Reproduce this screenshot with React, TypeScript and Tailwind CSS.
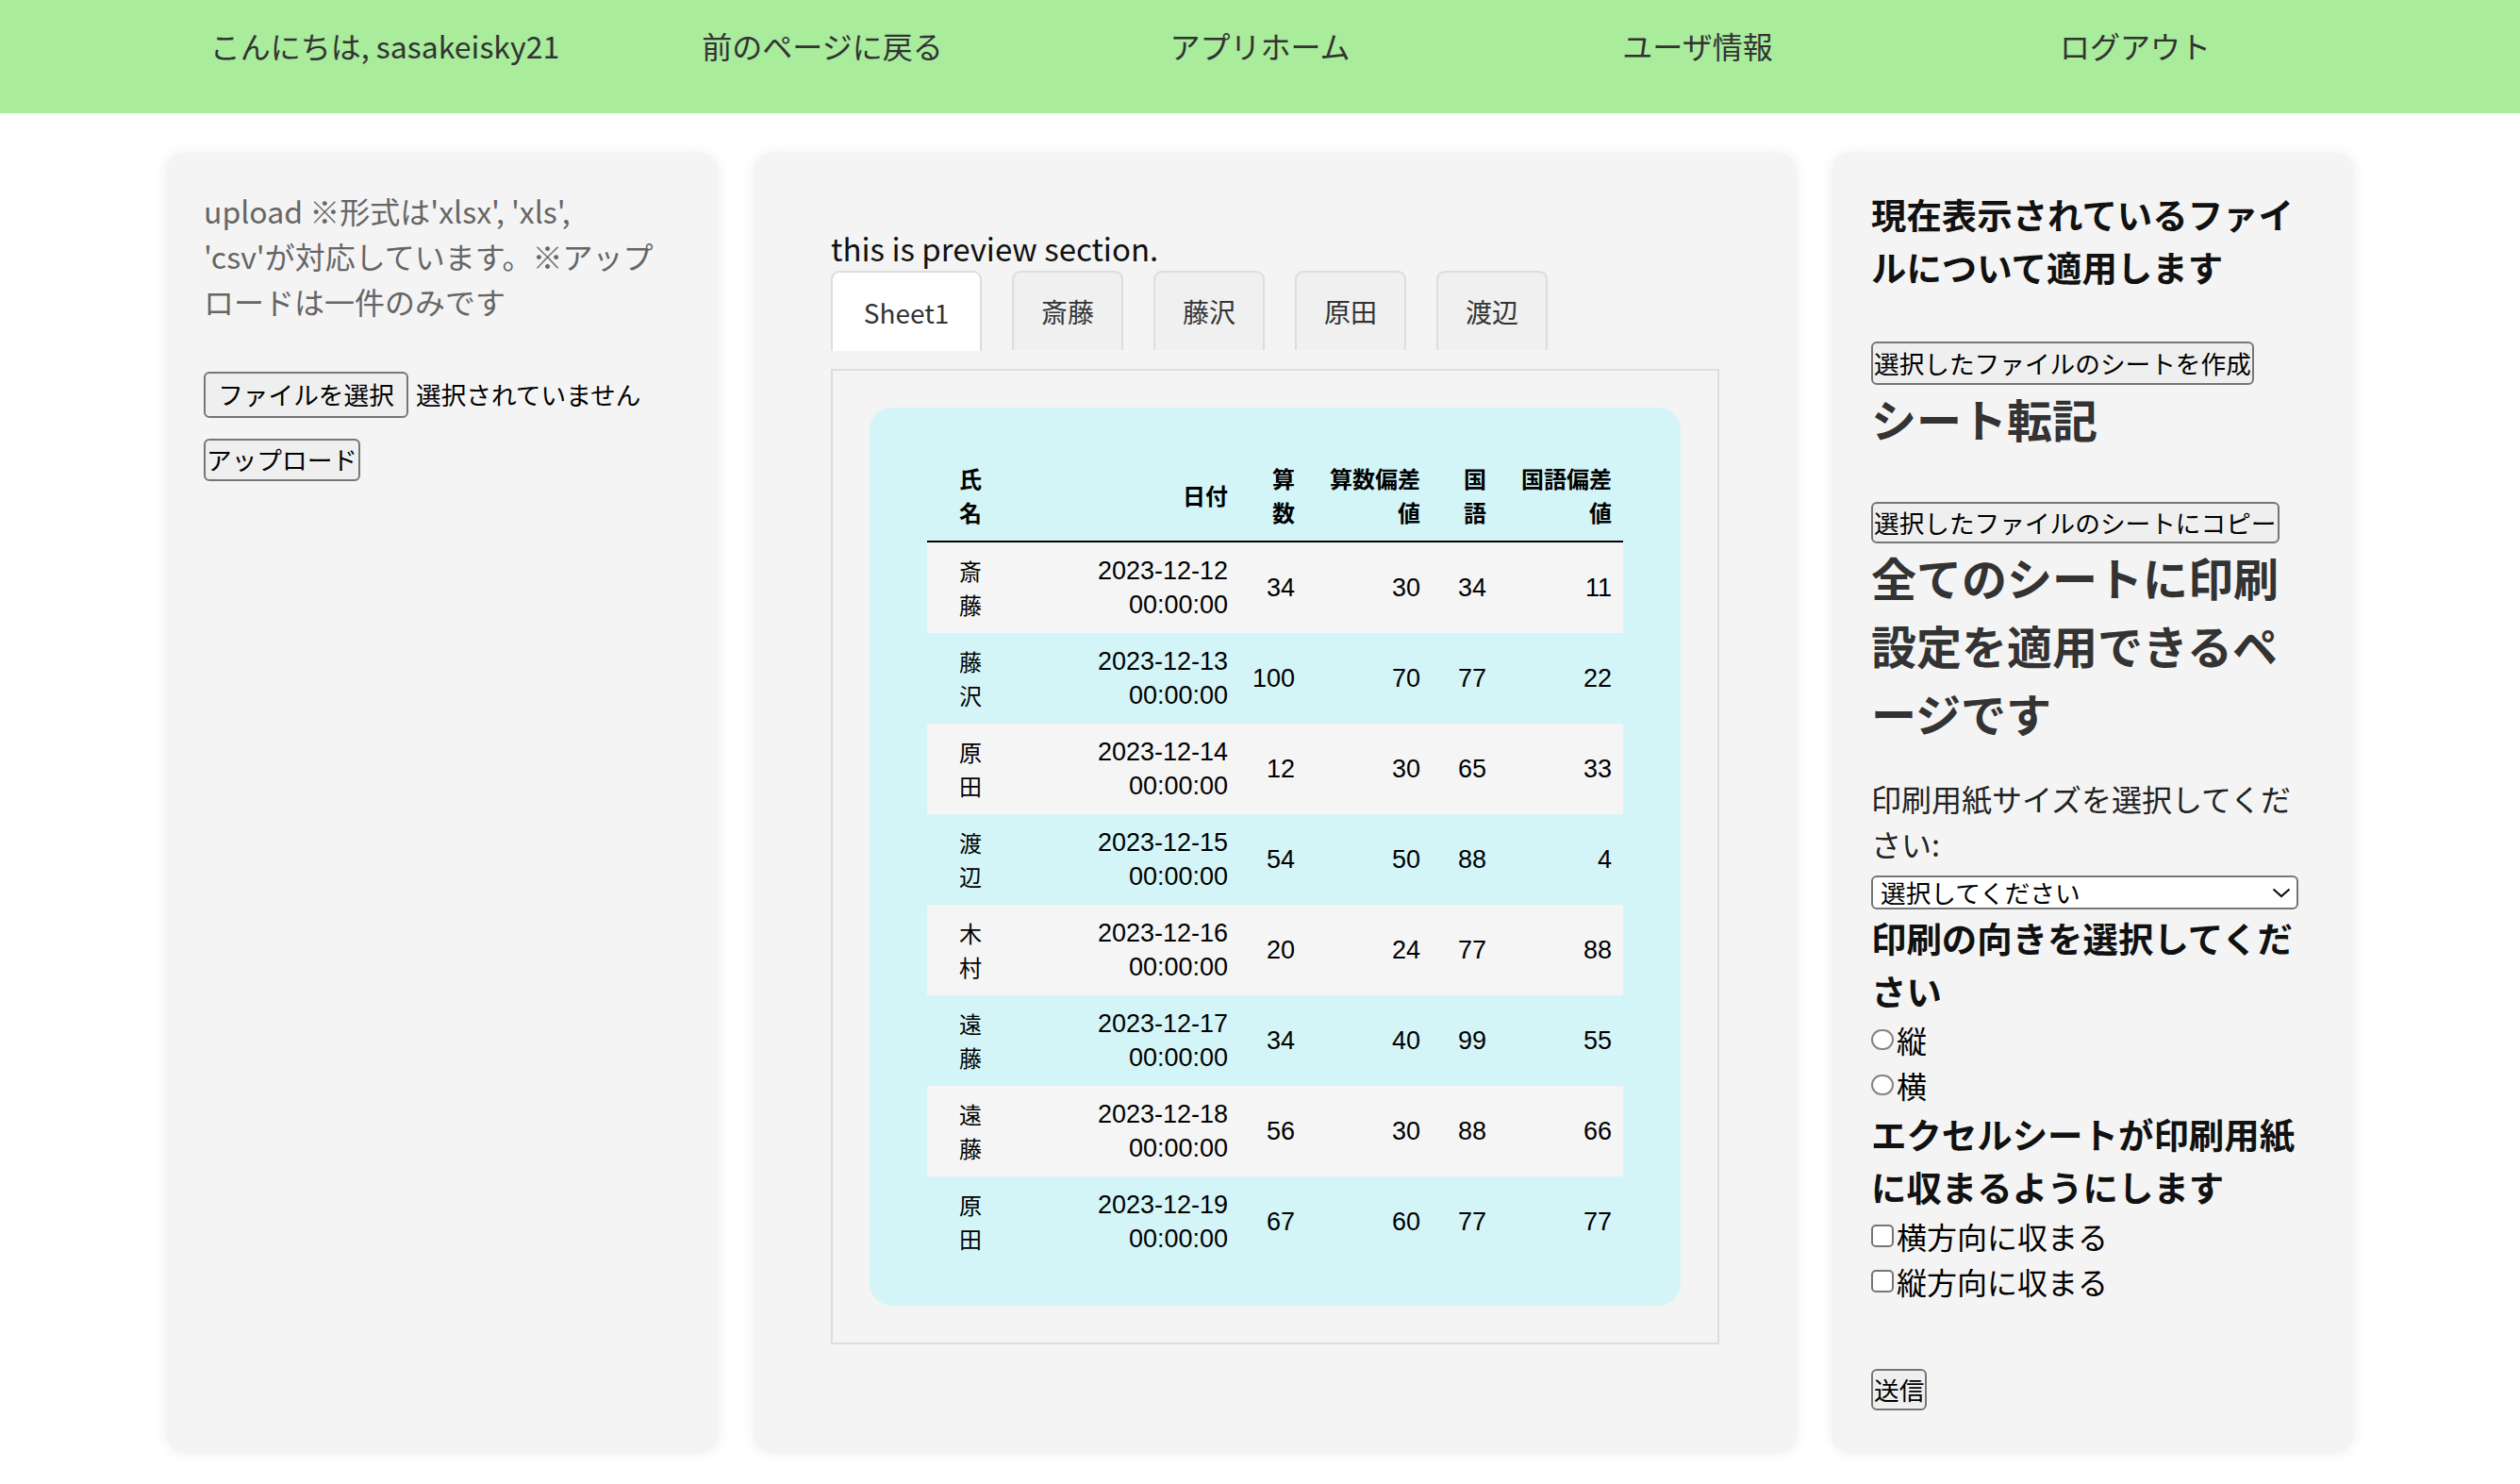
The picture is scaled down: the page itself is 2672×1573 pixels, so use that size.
import React from "react";

const rows = [
  ["斎藤", "2023-12-12", "34", "30", "34", "11"],
  ["藤沢", "2023-12-13", "100", "70", "77", "22"],
  ["原田", "2023-12-14", "12", "30", "65", "33"],
  ["渡辺", "2023-12-15", "54", "50", "88", "4"],
  ["木村", "2023-12-16", "20", "24", "77", "88"],
  ["遠藤", "2023-12-17", "34", "40", "99", "55"],
  ["遠藤", "2023-12-18", "56", "30", "88", "66"],
  ["原田", "2023-12-19", "67", "60", "77", "77"],
];

const navItems = ["こんにちは, sasakeisky21", "前のページに戻る", "アプリホーム", "ユーザ情報", "ログアウト"];
const tabs = ["斎藤", "藤沢", "原田", "渡辺"];

function Btn({ children, className = "" }: { children: React.ReactNode; className?: string }) {
  return (
    <div
      className={`inline-flex items-center justify-center border-2 border-[#767676] rounded-[6px] bg-[#efefef] text-[26.67px] text-black leading-none whitespace-nowrap ${className}`}
    >
      {children}
    </div>
  );
}

const numCell =
  "px-[12px] py-[12px] text-right align-middle font-['Liberation_Sans','Noto_Sans_CJK_JP',sans-serif] text-[27px]";

export default function App() {
  return (
    <div className="min-h-[1573px] bg-white font-['Noto_Sans_CJK_JP','Noto_Sans',sans-serif] text-black">
      <header className="h-[120px] bg-[#a8ec9c]">
        <nav className="mx-[176px] grid grid-cols-5 pt-[24px]">
          {navItems.map((n) => (
            <div key={n} className="text-center text-[32px] leading-[48px] text-[#333]">
              {n}
            </div>
          ))}
        </nav>
      </header>

      <main className="mx-[176px] mt-[42px] grid grid-cols-[586px_1106px_554px] gap-x-[37px]">
        {/* Left panel */}
        <section className="h-[1378px] rounded-[20px] bg-[#f4f4f4] shadow-[0_0_14px_rgba(0,0,0,0.07)] px-[40px] pt-[37px]">
          <p className="text-[32px] leading-[48px] text-[#666] whitespace-nowrap">
            upload ※形式は'xlsx', 'xls',
            <br />
            'csv'が対応しています。※アップ
            <br />
            ロードは一件のみです
          </p>
          <div className="mt-[51px] flex items-center gap-[8px]">
            <Btn className="h-[49px] w-[217px]">ファイルを選択</Btn>
            <span className="text-[26.67px] leading-none">選択されていません</span>
          </div>
          <div className="mt-[22px]">
            <Btn className="h-[45px] w-[166px]">アップロード</Btn>
          </div>
        </section>

        {/* Middle panel */}
        <section className="h-[1378px] rounded-[20px] bg-[#f4f4f4] shadow-[0_0_14px_rgba(0,0,0,0.07)] px-[82px] pt-[77px]">
          <p className="text-[33px] leading-[48px] text-[#111]">this is preview section.</p>
          <div className="flex items-start gap-[32px] h-[84px]">
            <div className="h-[85px] w-[160px] flex items-center justify-center rounded-t-[9px] border-2 border-b-0 border-[#dddddd] bg-white text-[28px] text-[#333]">
              Sheet1
            </div>
            {tabs.map((t) => (
              <div
                key={t}
                className="h-[84px] w-[118px] flex items-center justify-center rounded-t-[9px] border-2 border-b-0 border-[#dddddd] bg-[#f0f0f0] text-[28px] text-[#333]"
              >
                {t}
              </div>
            ))}
          </div>
          <div className="mt-[20px] border-2 border-[#dddddd] p-[39px]">
            <div className="rounded-[24px] bg-[#d4f5f7] pt-[45px] pb-[41px]">
              <table className="mx-auto w-[738px] table-fixed border-collapse text-[24px] leading-[36px]">
                <colgroup>
                  <col className="w-[70px]" />
                  <col className="w-[261px]" />
                  <col className="w-[71px]" />
                  <col className="w-[133px]" />
                  <col className="w-[70px]" />
                  <col className="w-[133px]" />
                </colgroup>
                <thead>
                  <tr className="border-b-2 border-black">
                    {["氏名", "日付", "算数", "算数偏差値", "国語", "国語偏差値"].map((h) => (
                      <th key={h} className="px-[12px] py-[12px] text-right align-middle font-bold">
                        {h}
                      </th>
                    ))}
                  </tr>
                </thead>
                <tbody>
                  {rows.map((r, i) => (
                    <tr key={i} className={i % 2 === 0 ? "bg-[#f5f5f5]" : ""}>
                      <td className="px-[12px] py-[12px] text-right align-middle">{r[0]}</td>
                      <td className={numCell}>
                        {r[1]}
                        <br />
                        00:00:00
                      </td>
                      <td className={numCell}>{r[2]}</td>
                      <td className={numCell}>{r[3]}</td>
                      <td className={numCell}>{r[4]}</td>
                      <td className={numCell}>{r[5]}</td>
                    </tr>
                  ))}
                </tbody>
              </table>
            </div>
          </div>
        </section>

        {/* Right panel */}
        <section className="h-[1378px] rounded-[20px] bg-[#f4f4f4] shadow-[0_0_14px_rgba(0,0,0,0.07)] px-[42px] pt-[37px]">
          <h3 className="text-[37.44px] leading-[56px] font-bold text-[#111] whitespace-nowrap">
            現在表示されているファイ
            <br />
            ルについて適用します
          </h3>
          <div className="mt-[51px]">
            <Btn className="h-[46px] px-[1px]">選択したファイルのシートを作成</Btn>
          </div>
          <h2 className="mt-[-1px] text-[48px] leading-[72px] font-bold text-[#333]">シート転記</h2>
          <div className="mt-[53px]">
            <Btn className="h-[44px] px-[1px]">選択したファイルのシートにコピー</Btn>
          </div>
          <h2 className="mt-[-1px] text-[48px] leading-[72px] font-bold text-[#333] whitespace-nowrap">
            全てのシートに印刷
            <br />
            設定を適用できるペ
            <br />
            ージです
          </h2>
          <p className="mt-[31px] text-[32px] leading-[48px] text-[#222] whitespace-nowrap">
            印刷用紙サイズを選択してくだ
            <br />
            さい:
          </p>
          <div className="mt-[10px] relative h-[36px] w-[453px] rounded-[6px] border-2 border-[#767676] bg-white flex items-center pl-[8px] text-[26.67px] leading-none">
            選択してください
            <svg className="absolute right-[6px] top-[11px]" width="20" height="11" viewBox="0 0 20 11" fill="none">
              <path d="M1.5 1.5 L10 9 L18.5 1.5" stroke="#111" strokeWidth="2.2" />
            </svg>
          </div>
          <h3 className="mt-[2px] text-[37.44px] leading-[56px] font-bold text-[#111] whitespace-nowrap">
            印刷の向きを選択してくだ
            <br />
            さい
          </h3>
          {["縦", "横"].map((o) => (
            <div key={o} className="flex items-center h-[48px] text-[32px]">
              <span className="mr-[3px] inline-block h-[22px] w-[24px] rounded-full border-2 border-[#858585] bg-white" />
              {o}
            </div>
          ))}
          <h3 className="text-[37.44px] leading-[56px] font-bold text-[#111] whitespace-nowrap">
            エクセルシートが印刷用紙
            <br />
            に収まるようにします
          </h3>
          {["横方向に収まる", "縦方向に収まる"].map((o) => (
            <div key={o} className="flex items-center h-[48px] text-[32px]">
              <span className="mr-[3px] inline-block h-[24px] w-[24px] rounded-[5px] border-2 border-[#767676] bg-white" />
              {o}
            </div>
          ))}
          <div className="mt-[69px]">
            <Btn className="h-[44px] px-[1px]">送信</Btn>
          </div>
        </section>
      </main>
    </div>
  );
}
